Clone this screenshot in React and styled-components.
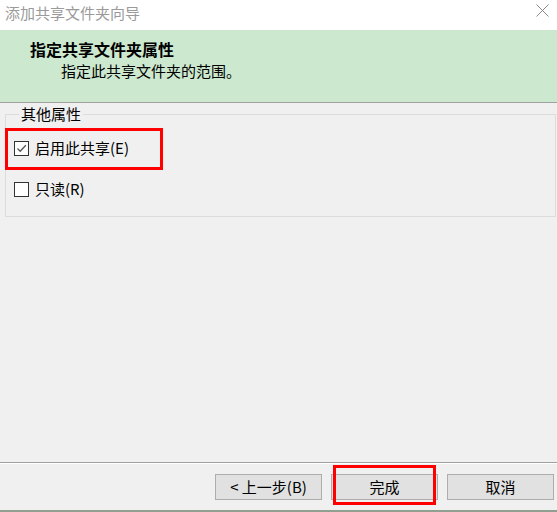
import React from 'react';
import styled, { createGlobalStyle } from 'styled-components';

const Global = createGlobalStyle`
  html, body {
    margin: 0;
    padding: 0;
    background: #f0f0f0;
  }
  body {
    font-family: "Noto Sans CJK SC", "Microsoft YaHei", sans-serif;
    font-size: 15px;
    color: #000;
  }
`;

const Window = styled.div`
  width: 557px;
  height: 512px;
  display: flex;
  flex-direction: column;
  background: #f0f0f0;
  overflow: hidden;
`;

const TitleBar = styled.div`
  height: 30px;
  flex: none;
  background: #fff;
  display: flex;
  align-items: flex-start;
  justify-content: space-between;
  padding: 3px 8px 0 5px;
  box-sizing: border-box;
`;

const Title = styled.span`
  color: #9a9a9a;
  font-size: 15px;
  line-height: 20px;
`;

const Close = styled.button`
  border: 0;
  background: none;
  padding: 0;
  margin-top: 1px;
  width: 13px;
  height: 13px;
  display: flex;
`;

const Header = styled.div`
  height: 73px;
  flex: none;
  box-sizing: border-box;
  background: #cce8cf;
  border-bottom: 1px solid #a0a0a0;
  padding: 9px 0 0 30px;
`;

const Heading = styled.div`
  font-size: 16px;
  font-weight: 700;
  line-height: 20px;
`;

const Subtitle = styled.div`
  font-size: 15px;
  line-height: 20px;
  margin: 2px 0 0 31px;
`;

const Body = styled.div`
  flex: 1;
  padding: 1px 1px 0 5px;
`;

const Group = styled.fieldset`
  margin: 0;
  padding: 14px 0 17px 8px;
  border: 1px solid #dcdcdc;
  display: flex;
  flex-direction: column;
  gap: 21px;
`;

const Legend = styled.legend`
  margin-left: 5px;
  padding: 0 2px;
  font-size: 15px;
  line-height: 20px;
`;

const Option = styled.label`
  position: relative;
  display: flex;
  align-items: center;
  gap: 6px;
  height: 20px;
  line-height: 20px;

  ${p => p.$marked && `
    &::after {
      content: '';
      position: absolute;
      left: -9px;
      top: -10px;
      width: 158px;
      height: 42px;
      box-sizing: border-box;
      border: 3px solid #f00;
      pointer-events: none;
    }
  `}
`;

const Box = styled.span`
  width: 15px;
  height: 15px;
  box-sizing: border-box;
  border: 1px solid #333;
  background: #fff;
  display: flex;
  align-items: center;
  justify-content: center;
`;

const Separator = styled.div`
  flex: none;
  height: 1px;
  background: #a0a0a0;
  border-bottom: 1px solid #fff;
`;

const Footer = styled.div`
  flex: none;
  height: 46px;
  box-sizing: border-box;
  display: flex;
  justify-content: flex-end;
  align-items: flex-start;
  gap: 9px;
  padding: 10px 3px 0 0;
`;

const Button = styled.button`
  position: relative;
  width: 107px;
  height: 26px;
  box-sizing: border-box;
  border: 1px solid #adadad;
  background: #e1e1e1;
  font-family: inherit;
  font-size: 15px;
  line-height: 20px;
  color: #000;
  padding: 0;

  ${p => p.$marked && `
    &::after {
      content: '';
      position: absolute;
      left: 1px;
      right: 1px;
      top: -10px;
      bottom: -6px;
      border: 3px solid #f00;
      pointer-events: none;
    }
  `}
`;

const Taskbar = styled.div`
  flex: none;
  height: 2px;
  background: #909f90;
`;

const Check = () => (
  <svg width="11" height="11" viewBox="0 0 11 11">
    <polyline points="1.5,5.5 4.2,8.2 9.8,2.2" fill="none" stroke="#555" strokeWidth="1.3" />
  </svg>
);

const CloseIcon = () => (
  <svg width="13" height="13" viewBox="0 0 13 13">
    <path d="M0.5 0.5 L12.5 12.5 M12.5 0.5 L0.5 12.5" stroke="#8a8a8a" strokeWidth="1" />
  </svg>
);

const options = [
  { label: '启用此共享(E)', checked: true, marked: true },
  { label: '只读(R)', checked: false },
];

export default function App() {
  return (
    <Window>
      <Global />
      <TitleBar>
        <Title>添加共享文件夹向导</Title>
        <Close aria-label="关闭"><CloseIcon /></Close>
      </TitleBar>
      <Header>
        <Heading>指定共享文件夹属性</Heading>
        <Subtitle>指定此共享文件夹的范围。</Subtitle>
      </Header>
      <Body>
        <Group>
          <Legend>其他属性</Legend>
          {options.map(o => (
            <Option key={o.label} $marked={o.marked}>
              <Box>{o.checked && <Check />}</Box>
              {o.label}
            </Option>
          ))}
        </Group>
      </Body>
      <Separator />
      <Footer>
        <Button>&lt; 上一步(B)</Button>
        <Button $marked>完成</Button>
        <Button>取消</Button>
      </Footer>
      <Taskbar />
    </Window>
  );
}
